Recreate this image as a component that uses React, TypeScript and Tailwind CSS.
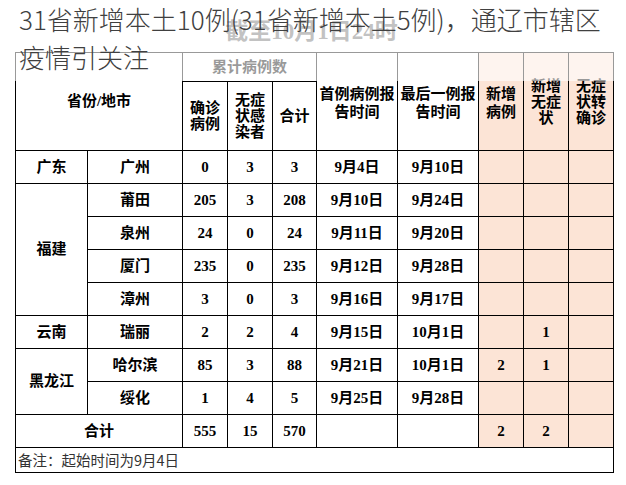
import React from "react";

const F = { fontFamily: '"Liberation Serif", "Noto Sans CJK SC", serif' };

function C({ children, className = "" }: { children?: React.ReactNode; className?: string }) {
  return (
    <div className={`bg-white flex items-center justify-center text-center font-bold text-[15px] text-black ${className}`}>
      {children}
    </div>
  );
}

function P({ children, className = "" }: { children?: React.ReactNode; className?: string }) {
  return <C className={`!bg-[#fce4d6] ${className}`}>{children}</C>;
}

type Row = { city: string; a: string; b: string; t: string; f: string; l: string; p1?: string; p2?: string; p3?: string };

function DataRow({ r }: { r: Row }) {
  return (
    <>
      <C>{r.city}</C>
      <C>{r.a}</C>
      <C>{r.b}</C>
      <C>{r.t}</C>
      <C>{r.f}</C>
      <C>{r.l}</C>
      <P>{r.p1}</P>
      <P>{r.p2}</P>
      <P>{r.p3}</P>
    </>
  );
}

export default function App() {
  const fujian: Row[] = [
    { city: "莆田", a: "205", b: "3", t: "208", f: "9月10日", l: "9月24日" },
    { city: "泉州", a: "24", b: "0", t: "24", f: "9月11日", l: "9月20日" },
    { city: "厦门", a: "235", b: "0", t: "235", f: "9月12日", l: "9月28日" },
    { city: "漳州", a: "3", b: "0", t: "3", f: "9月16日", l: "9月17日" },
  ];
  return (
    <div className="relative w-[626px] h-[485px] bg-white overflow-hidden" style={F}>
      <div className="h-[52px] w-[599px] ml-[12px] pt-[20px] text-center text-[23px] leading-[24px] font-bold text-[#666]">
        截至10月1日24时
      </div>
      <div className="ml-[15px] w-[599px] grid bg-black gap-px p-px grid-cols-[71px_94px_44px_44px_43px_80px_80px_44px_44px_44px] grid-rows-[28px_68px_repeat(9,32px)_24px]">
        <C className="col-span-2 row-span-2">省份/地市</C>
        <C className="col-span-3">累计病例数</C>
        <C className="row-span-2 leading-[18px] pt-[2px]">首例病例报<br />告时间</C>
        <C className="row-span-2 leading-[18px] pt-[2px]">最后一例报<br />告时间</C>
        <P className="row-span-2 leading-[18px] pt-[2px]">新增<br />病例</P>
        <P className="row-span-2 leading-[16px]">新增<br />无症<br />状</P>
        <P className="row-span-2 leading-[16px]">无症<br />状转<br />确诊</P>
        <C className="leading-[16px]">确诊<br />病例</C>
        <C className="leading-[16px]">无症<br />状感<br />染者</C>
        <C>合计</C>

        <C>广东</C>
        <DataRow r={{ city: "广州", a: "0", b: "3", t: "3", f: "9月4日", l: "9月10日" }} />

        <C className="row-span-4">福建</C>
        {fujian.map((r) => (
          <DataRow key={r.city} r={r} />
        ))}

        <C>云南</C>
        <DataRow r={{ city: "瑞丽", a: "2", b: "2", t: "4", f: "9月15日", l: "10月1日", p2: "1" }} />

        <C className="row-span-2">黑龙江</C>
        <DataRow r={{ city: "哈尔滨", a: "85", b: "3", t: "88", f: "9月21日", l: "10月1日", p1: "2", p2: "1" }} />
        <DataRow r={{ city: "绥化", a: "1", b: "4", t: "5", f: "9月25日", l: "9月28日" }} />

        <C className="col-span-2">合计</C>
        <C>555</C>
        <C>15</C>
        <C>570</C>
        <C />
        <C />
        <P>2</P>
        <P>2</P>
        <P />

        <div
          className="col-span-10 bg-white flex items-center pl-[2px] text-[14.5px] text-[#333]"
          style={{ fontFamily: '"Noto Sans CJK SC", sans-serif' }}
        >
          备注：起始时间为9月4日
        </div>
      </div>

      <div className="absolute left-0 right-0 top-0 h-[81px] bg-white/60 pointer-events-none" />

      <div
        className="absolute left-[19px] top-[0px] text-[26px] leading-[38px] text-[#404040] font-light whitespace-nowrap"
        style={{ fontFamily: '"Noto Sans CJK SC", sans-serif' }}
      >
        31省新增本土10例(31省新增本土5例)，通辽市辖区
        <br />
        疫情引关注
      </div>
    </div>
  );
}
